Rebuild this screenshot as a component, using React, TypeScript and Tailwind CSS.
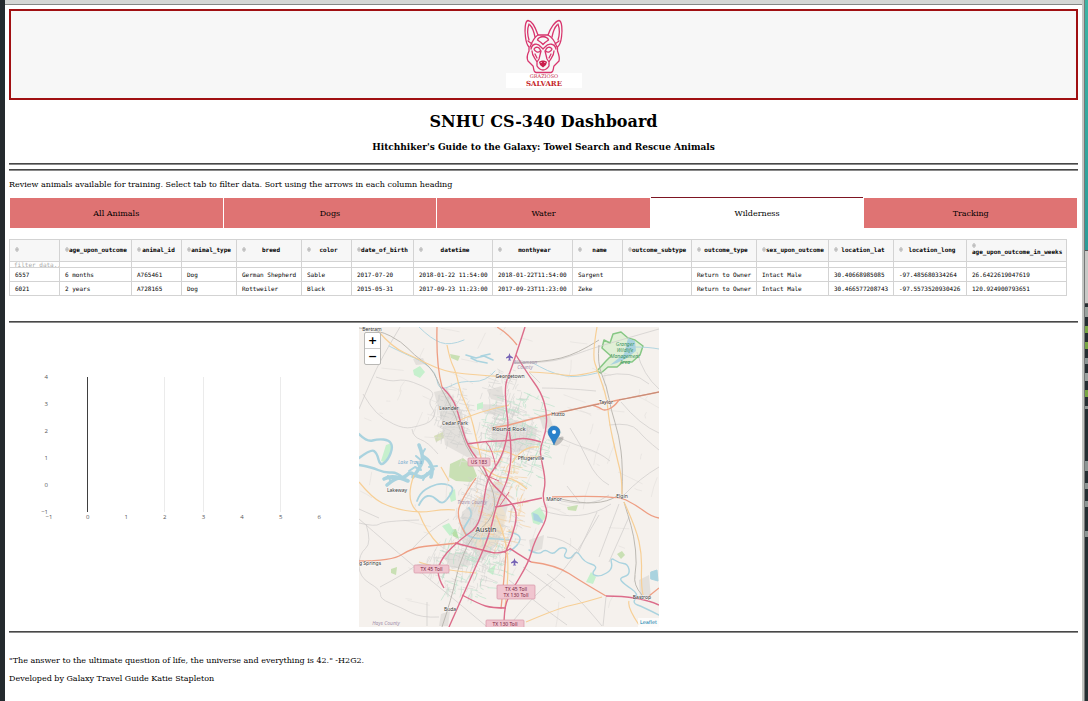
import React from "react";

const TABS = ["All Animals", "Dogs", "Water", "Wilderness", "Tracking"];

type Column = { name: string; width: string; wrap?: boolean };

const COLUMNS: Column[] = [
  { name: "", width: "w-[50px]" },
  { name: "age_upon_outcome", width: "w-[72px]" },
  { name: "animal_id", width: "w-[50px]" },
  { name: "animal_type", width: "w-[55px]" },
  { name: "breed", width: "w-[65px]" },
  { name: "color", width: "w-[50px]" },
  { name: "date_of_birth", width: "w-[62px]" },
  { name: "datetime", width: "w-[79px]" },
  { name: "monthyear", width: "w-[80px]" },
  { name: "name", width: "w-[50px]" },
  { name: "outcome_subtype", width: "w-[69px]" },
  { name: "outcome_type", width: "w-[65px]" },
  { name: "sex_upon_outcome", width: "w-[72px]" },
  { name: "location_lat", width: "w-[65px]" },
  { name: "location_long", width: "w-[73px]" },
  { name: "age_upon_outcome_in_weeks", width: "w-[100px]", wrap: true },
];

const ROWS = [
  ["6557", "6 months", "A765461", "Dog", "German Shepherd", "Sable", "2017-07-20", "2018-01-22 11:54:00", "2018-01-22T11:54:00", "Sargent", "", "Return to Owner", "Intact Male", "30.40668985085", "-97.485680334264", "26.6422619047619"],
  ["6021", "2 years", "A728165", "Dog", "Rottweiler", "Black", "2015-05-31", "2017-09-23 11:23:00", "2017-09-23T11:23:00", "Zeke", "", "Return to Owner", "Intact Male", "30.466577208743", "-97.5573520930426", "120.924900793651"],
];

function Logo() {
  return (
    <svg viewBox="0 0 76 70" className="h-[70px] w-[76px]" role="img" aria-label="Grazioso Salvare">
      <rect x="0" y="55" width="76" height="15" fill="#fff" />
      <g fill="none" stroke="#d8356d" strokeWidth="1.300" strokeLinejoin="round" strokeLinecap="round">
        <path d="M32 17C30 11 26 3 22 2.500C19 3 18.500 12 19.500 19C20 24 21 27 23 29V33C21 37 21 41 22 43L27 48C28 50 27 54 30 54.500H45C48 54 47 50 48 48L53 43C54 40 53 37 51.500 33V29C54 27 55 23 55.500 19C56.500 12 56 3 53 2.500C49 3 44 11 42 17Z" />
        <path d="M23 6C21.500 10 21.500 17 23 22M24 7C27 10 28 14 29 19M52 6C53.500 10 53.500 17 52 22M51 7C48 10 47 14 46 19" />
        <path d="M32 17C28 19 26 24 24 29M42 17C46 19 49 24 51 29M22 23L26 26M53 23L49 26" />
        <path d="M37 18.500C34 19 32 20 31.500 22L35 24.500L37 26.500L39 24.500L42.500 22C42 20 40 19 37 18.500Z" />
        <path d="M25 31C26 26 31 24 35 29L37 31L39 29C43 24 49 26 50 31" />
        <path d="M28 31C30 28 34 29 34.500 33C32 35 29 34 28 31ZM46 31C44 28 40 29 39.500 33C42 35 45 34 46 31Z" />
        <path d="M35 33L33 41L31 44V48C33 51 35 52 37 52C39 52 41 51 43 48V44L41 41L39 33M26 33C26 38 29 40 31 44M48 33C48 38 45 40 43 44M29 36L31 40M45 36L43 40" />
      </g>
      <path d="M33 44C35 42 39 42 41 44L40 47L37 49.500L34 47Z" fill="#c91f4d" />
      <path d="M34.500 44.500H36M38 44.500H39.500" stroke="#f7b9ca" strokeWidth=".8" />
      <text x="38" y="60" textAnchor="middle" fontSize="5" fontFamily="DejaVu Serif, serif" fill="#c4304c">GRAZIOSO</text>
      <text x="38" y="68" textAnchor="middle" fontSize="7" fontWeight="700" fontFamily="DejaVu Serif, serif" fill="#c41f2c">SALVARE</text>
    </svg>
  );
}

function Rule() {
  return <hr className="h-[2px] border-0 border-t border-b border-t-[#484848] border-b-[#8a8a8a]" />;
}

function SortArrows() {
  return (
    <button type="button" aria-label="Sort" className="shrink-0">
      <svg viewBox="0 0 4 5" className="h-[5px] w-[4px]">
        <path d="M.5 2.200L2 .2L3.500 2.200ZM.5 2.800L2 4.800L3.500 2.800Z" fill="#dedede" stroke="#9c9c9c" strokeWidth=".5" />
      </svg>
    </button>
  );
}

function DataTable() {
  return (
    <table className="table-fixed w-[1058px] border-collapse font-['DejaVu_Sans_Mono',monospace] text-[6px] leading-[8px]">
      <colgroup>
        {COLUMNS.map((c, i) => (
          <col key={i} className={c.width} />
        ))}
      </colgroup>
      <thead>
        <tr className="h-[22px] bg-[#f7f7f7]">
          {COLUMNS.map((c, i) => (
            <th key={i} className="border border-[#d3d3d3] px-[5px] pb-[2px] font-bold whitespace-nowrap">
              <div className={c.wrap ? "flex flex-col items-start leading-[8px]" : "flex items-center"}>
                <SortArrows />
                <span className="flex-1 text-center">{c.name}</span>
              </div>
            </th>
          ))}
        </tr>
        <tr className="h-[6px]">
          {COLUMNS.map((c, i) => (
            <td key={i} className="border border-[#d3d3d3] p-0">
              <input
                aria-label={"Filter " + (c.name || "index")}
                placeholder={i === 0 ? "filter data..." : ""}
                className="block h-[5px] w-full overflow-hidden pl-[4px] text-[6px] leading-[5px] outline-none placeholder:text-[#a8a8a8]"
              />
            </td>
          ))}
        </tr>
      </thead>
      <tbody>
        {ROWS.map((row) => (
          <tr key={row[0]} className="h-[14px]">
            {row.map((cell, i) => (
              <td key={i} className="border border-[#d3d3d3] px-[5px] whitespace-nowrap">
                {cell}
              </td>
            ))}
          </tr>
        ))}
      </tbody>
    </table>
  );
}

function Plot() {
  const xs = [-1, 0, 1, 2, 3, 4, 5, 6];
  const ys = [4, 3, 2, 1, 0, -1];
  const label = (n: number) => (n < 0 ? "−" + Math.abs(n) : String(n));
  return (
    <svg viewBox="0 0 350 300" className="h-[300px] w-[350px] shrink-0" role="img" aria-label="Chart">
      <g stroke="#ebebeb" strokeWidth="1">
        <path d="M155.500 50V185M194.500 50V185M271.500 50V185" />
      </g>
      <path d="M78.500 50V185" stroke="#3f3f3f" strokeWidth="1" />
      <g fontFamily="Open Sans, sans-serif" fontSize="6" fill="#555">
        {ys.map((n, i) => (
          <text key={n} x="39" y={52 + i * 27} textAnchor="end">
            {label(n)}
          </text>
        ))}
        {xs.map((n, i) => (
          <text key={n} x={40 + i * 38.6} y="192" textAnchor="middle">
            {label(n)}
          </text>
        ))}
      </g>
    </svg>
  );
}

function seeded(seed: number) {
  let s = seed;
  return () => {
    s = (s * 16807) % 2147483647;
    return s / 2147483647;
  };
}

function streets(seed: number, cx: number, cy: number, rx: number, ry: number, count: number, max: number) {
  const rand = seeded(seed);
  let d = "";
  for (let i = 0; i < count; i++) {
    const a = rand() * 6.283;
    const r = Math.sqrt(rand());
    const x = cx + Math.cos(a) * r * rx;
    const y = cy + Math.sin(a) * r * ry;
    const dir = (rand() > 0.5 ? 0.3 : 1.87) + (rand() - 0.5) * 0.5;
    const len = 2 + rand() * max;
    const bend = (rand() - 0.5) * 5;
    d += `M${x.toFixed(1)} ${y.toFixed(1)}q${((Math.cos(dir) * len) / 2 + bend).toFixed(1)} ${((Math.sin(dir) * len) / 2).toFixed(1)} ${(Math.cos(dir) * len).toFixed(1)} ${(Math.sin(dir) * len).toFixed(1)}`;
  }
  return d;
}

// Rounds the corners of polylines written with absolute M, L, H and V commands.
function smooth(d: string) {
  let out = "";
  for (const part of d.split("M").filter(Boolean)) {
    const pts: [number, number][] = [];
    for (const seg of part.match(/[LHV]?[^LHV]+/g) || []) {
      const nums = (seg.match(/-?[\d.]+/g) || []).map(Number);
      const last = pts[pts.length - 1];
      if (seg[0] === "H") pts.push([nums[0], last[1]]);
      else if (seg[0] === "V") pts.push([last[0], nums[0]]);
      else for (let i = 0; i + 1 < nums.length; i += 2) pts.push([nums[i], nums[i + 1]]);
    }
    out += `M${pts[0][0]} ${pts[0][1]}`;
    for (let i = 1; i < pts.length - 1; i++) {
      const end = i === pts.length - 2;
      const mx = end ? pts[i + 1][0] : (pts[i][0] + pts[i + 1][0]) / 2;
      const my = end ? pts[i + 1][1] : (pts[i][1] + pts[i + 1][1]) / 2;
      out += `Q${pts[i][0]} ${pts[i][1]} ${mx} ${my}`;
    }
    if (pts.length === 2) out += `L${pts[1][0]} ${pts[1][1]}`;
  }
  return out;
}

const STREETS_GRAY = [
  streets(11, 94, 88, 18, 32, 120, 9),
  streets(23, 148, 108, 30, 34, 130, 12),
  streets(37, 128, 190, 32, 52, 200, 10),
  streets(41, 100, 238, 32, 30, 100, 12),
  streets(53, 143, 65, 20, 28, 60, 12),
].join("");
const STREETS_GREEN = streets(67, 158, 108, 38, 52, 120, 12) + streets(71, 112, 235, 38, 38, 70, 10);
const STREETS_WARM = streets(83, 140, 175, 26, 46, 90, 10);
const STREETS_RURAL = streets(97, 150, 150, 170, 165, 90, 26);

const PLACES: [string, number, number, number][] = [
  ["Bertram", 13, 4, 5],
  ["Georgetown", 151, 51, 5],
  ["Leander", 90, 83, 5],
  ["Cedar Park", 96, 98, 5],
  ["Hutto", 199, 89, 5],
  ["Taylor", 247, 77, 5],
  ["Round Rock", 150, 104, 6],
  ["Pflugerville", 172, 133, 5],
  ["Lakeway", 38, 165, 5],
  ["Austin", 127, 205, 7],
  ["Manor", 195, 174, 5],
  ["Elgin", 263, 171, 5],
  ["g Springs", 11, 238, 5],
  ["Buda", 91, 284, 5],
  ["Bastrop", 283, 272, 5],
];

function Shield({ x, y, w, h, lines }: { x: number; y: number; w: number; h: number; lines: string[] }) {
  return (
    <g>
      <rect x={x} y={y} width={w} height={h} rx="1" fill="#f0c5cf" stroke="#d797a7" strokeWidth=".7" />
      {lines.map((t, i) => (
        <text key={t} x={x + w / 2} y={y + 6 + i * 6} textAnchor="middle" fontSize="5" fill="#7a2440">
          {t}
        </text>
      ))}
    </g>
  );
}

function MapView() {
  return (
    <div className="relative h-[300px] w-[300px] shrink-0 overflow-hidden bg-[#f5f1ed]">
      <svg viewBox="0 0 300 300" className="h-[300px] w-[300px]" role="img" aria-label="Map of Austin">
        <g fill="#dcd9d6" opacity=".7">
          <path d="M75 65L88 62L103 85L107 110L122 128L108 130L86 118L83 95Z" />
          <path d="M128 63L143 59L145 75L132 72ZM118 77L145 78V88L126 87Z" />
          <path d="M132 98L158 93L178 102L175 122L150 126L133 115Z" />
          <path d="M103 185L119 172L142 150L149 178L140 215L124 233L101 212Z" />
          <path d="M170 213L185 208L183 222L172 226ZM83 228L108 224L112 238L93 242ZM180 88L190 87L194 99L184 102ZM54 32L64 31L67 37L57 38ZM280 253L290 248L292 272L281 270ZM82 287L91 284L89 299L80 299Z" />
        </g>
        <path d="M128 188L142 178L148 190L140 214L122 226L112 212Z" fill="#f0dfc4" opacity=".6" />
        <g fill="#c9e0b4">
          <path d="M54 43L61 39L66 45L61 51L55 48Z" fill="#c6f0cd" />
          <path d="M91 27L101 29L99 34L92 31Z" />
          <path d="M118 77L124 75L124 81L118 83Z" fill="#c6f0cd" />
          <path d="M75 109L84 105L85 111L77 115Z" fill="#d6dfb8" />
          <path d="M91 137L104 131L114 139L118 149L112 155L97 154L90 150Z" />
          <path d="M22 134L27 118L33 116L31 129L25 135Z" fill="#c6f0cd" />
          <path d="M92 203L97 202L100 212L94 209Z" fill="#b6dfa8" />
          <path d="M83 199L90 196L95 204L91 209ZM172 186L181 180L187 190L180 198L174 196ZM227 255L232 245L237 250L234 257Z" fill="#c6f0cd" />
          <path d="M258 227L263 224L266 228L262 232ZM208 180L219 178L217 184L209 183ZM32 242L38 240L37 248L32 246Z" />
          <path d="M90 166L96 162L97 173L92 175ZM128 244L137 237L134 248Z" fill="#c6f0cd" />
        </g>
        <path d="M243 21L245 13L251 16L254 7L262 5L269 11L276 13L284 19L281 28L273 35L264 35L258 40L249 40L242 46L238 44L247 34L252 29Z" fill="#e0efd6" stroke="#86c784" strokeWidth="1.500" strokeLinejoin="round" />
        <path d="M269 11L276 14L277 24L268 31L258 36L251 38L265 27Z" fill="#aad3df" />
        <g fill="none" stroke="#aad3df" strokeLinecap="round" strokeLinejoin="round">
          <path d={smooth("M0 107L8 115L19 112L30 113L34 120L29 133L21 139L18 126L12 122L0 131M0 138L12 140L26 146L38 145L44 151")} strokeWidth="2.400" />
          <path d={smooth("M28 158L36 151L45 151L51 145L57 149L66 151L74 142M60 118L65 130L61 141L54 150M65 130L76 137L72 150M25 152L34 147L49 154")} strokeWidth="3.600" />
          <path d="M50 144L56 140L62 143L58 135M66 122L63 127M70 140L78 139M57 129L63 134M32 155L29 149M68 146L64 153" strokeWidth="2" />
          <path d={smooth("M58 174L61 166L72 159L83 156L96 160L88 173L82 177L73 168L64 170L60 178M110 181L114 186L108 196L103 204L114 212L134 211L150 213")} strokeWidth="1.800" />
          <path d="M107 28L117 31L125 29L134 33M112 31L118 34L128 36M122 29L131 27" strokeWidth="1.600" />
          <path d={smooth("M30 19L48 28L63 34L77 46L79 60L86 62L101 54L127 55L136 44M60 0L72 12L91 19L105 13M172 35L181 40L196 47L218 51L238 46M276 20L290 20L300 22")} strokeWidth=".9" />
          <path d={smooth("M150 205L162 207L160 218L151 224M170 223L180 228L186 222L194 228L201 220L209 222L204 230L212 232L218 223L225 235L239 239L232 247L241 250L254 242L251 230L260 236L269 237L271 248L260 251L265 257L280 267L273 276L284 280L300 288M177 188L183 194")} strokeWidth="1.400" />
          <path d="M292 245L298 243L299 254L292 252Z" fill="#aad3df" strokeWidth="1" />
          <path d="M174 186L179 188L184 196L175 193Z" fill="#aad3df" strokeWidth=".5" />
        </g>
        <g fill="none" strokeLinecap="round">
          <path d={STREETS_RURAL} stroke="#e2dfdc" strokeWidth=".6" />
          <path d={STREETS_GRAY} stroke="#cfcecc" strokeWidth=".5" />
          <path d={STREETS_GREEN} stroke="#b5e0c8" strokeWidth=".6" />
          <path d={STREETS_WARM} stroke="#f3cd9c" strokeWidth=".6" />
        </g>
        <g fill="none" stroke="#cfccca" strokeWidth=".7" strokeLinejoin="round">
          <path d={smooth("M41 0L28 22L14 48L0 82M17 50L31 55L45 52L64 59L76 66L69 76L77 86L72 95L60 99L45 102L24 92L11 79L4 67M53 102L54 110L69 115L79 127M0 192L30 218L70 252L90 268L127 299")} />
          <path d={smooth("M0 196L17 200L24 194L60 193M7 197L13 216L0 227L0 250L22 263L21 272L41 280L62 291L80 290M21 260L47 246L61 235L72 238M68 275V299M90 192L70 203L54 221M0 182L20 191")} />
          <path d={smooth("M155 36L190 36L218 27L237 20L300 2M278 25L284 48L300 62M262 75L281 98L300 106M244 49L273 42L290 57M183 61L205 61L237 64M211 101L222 118L237 151L250 158M187 104L210 116L240 125L251 134M170 45L181 56M250 98L272 95L286 112L300 123")} />
          <path d={smooth("M182 183L222 197L252 177M250 168L234 181L202 174M240 188L208 244L177 265L150 299M238 185L219 226M260 177L240 230M208 159L221 176M188 247L211 264L229 282L243 299M270 190L250 235M247 270L244 299M164 240L206 271M150 253L181 279L208 298M188 210L204 211L218 223M300 140L281 151L265 168")} />
        </g>
        <g fill="none" stroke="#b5b2ab" strokeWidth=".9">
          <path d={smooth("M0 1L20 3L43 15L55 28L73 41L82 62L97 88L106 119L123 143L136 166L135 190L112 210L99 240L93 270L83 300M155 36L186 35L218 27L240 13M202 172L240 181L258 169M265 175L269 188L275 209L278 237L274 258L283 268")} />
          <path d={smooth("M240 18L238 36L248 60L252 83L260 108L264 140L263 168")} />
        </g>
        <g fill="none" stroke="#f7cf96" strokeWidth="1.200" strokeLinejoin="round">
          <path d={smooth("M20 5L33 20L57 31L77 41L95 46L133 49L150 50M170 45L193 46L217 50L238 44M88 18L91 33L97 45L102 68L112 88L117 111L122 131M97 95L117 85L150 78M238 0L233 28L239 45L248 71L250 95L258 131L263 151V168")} />
          <path d={smooth("M0 155L13 171L33 181L60 186L87 182L96 183M60 186L67 205L80 218M55 148L45 175L60 186M265 175L277 201L283 228L282 258L284 268M167 295L200 281L223 276L243 270M60 235L75 240L95 244L117 246M110 119L129 126L146 123L162 132L182 129M137 188L147 210L150 248L146 280M270 274L268 280L280 298M82 140L90 154M153 136L164 118L180 120M124 140L137 151L154 150L168 162")} />
        </g>
        <g fill="none" stroke="#ee9e83" strokeWidth="1.300" strokeLinejoin="round">
          <path d={smooth("M78 0L77 38L83 60M0 234L33 234L53 221L77 218L100 216M193 170L257 168L277 178L293 190L300 191M150 98L187 88L213 83L233 78L260 73L300 65M233 78L240 80L245 84L255 80L260 73M138 0L150 7L158 18M172 235L197 238L223 255L247 269M290 269L300 261M150 98L133 101")} />
          <path d={smooth("M147 226L145 253L142 282M117 151L103 171L97 191L107 208")} />
        </g>
        <path d="M198 86L240 77M260 73L300 65" fill="none" stroke="#b88876" strokeWidth=".8" />
        <g fill="none" stroke="#dc6c8a" strokeWidth="1.400" strokeLinejoin="round">
          <path d={smooth("M166 0L157 28L150 48L146 58L147 81L150 101L143 131L128 151L124 181L118 201L103 211L83 230L77 248L85 261")} />
          <path d={smooth("M150 101L153 120L150 151L138 175L130 210L113 248L90 300")} />
          <path d={smooth("M157 28L168 46L182 65L188 85L187 105L181 121L182 131L187 155L183 171L190 188L175 215L170 235L150 268L145 283V300")} />
          <path d={smooth("M83 60L94 71L100 89L108 119L125 140L129 151L136 160L149 172L159 185L153 211L146 226M108 117L127 114L150 114L167 110L182 115M96 216L123 223L139 227L152 222L150 221L172 235M136 180L150 178L183 171M103 268L120 277L133 281L147 281M247 269L280 269L300 278")} />
          <path d={smooth("M127 115L134 122L137 142M126 148L140 154M150 165L140 180")} strokeWidth="1" />
        </g>
        <g fontFamily="Noto Sans, sans-serif">
          {PLACES.map(([name, x, y, size]) => (
            <text key={name} x={x} y={y} fontSize={size} textAnchor="middle" fill="#333" stroke="#fff" strokeWidth=".8" strokeOpacity=".65" paintOrder="stroke">
              {name}
            </text>
          ))}
          <g fontSize="5" fontStyle="italic" textAnchor="middle" fill="#a593ad">
            <text x="166" y="37">Williamson</text>
            <text x="166" y="42">County</text>
            <text x="113" y="177">Travis County</text>
            <text x="27" y="298">Hays County</text>
          </g>
          <text x="51" y="137" fontSize="5" fontStyle="italic" textAnchor="middle" fill="#7aaed0">Lake Travis</text>
          <g fontSize="5" fontStyle="italic" textAnchor="middle" fill="#3c9360">
            <text x="266" y="19">Granger</text>
            <text x="266" y="25">Wildlife</text>
            <text x="266" y="31">Management</text>
            <text x="266" y="37">Area</text>
          </g>
          <Shield x={109} y={131} w={22} h={8} lines={["US 183"]} />
          <Shield x={55} y={238} w={35} h={8} lines={["TX 45 Toll"]} />
          <Shield x={138} y={258} w={38} h={14} lines={["TX 45 Toll", "TX 130 Toll"]} />
          <Shield x={127} y={293} w={38} h={9} lines={["TX 130 Toll"]} />
        </g>
        <g fill="#7562b5">
          <path d="M150.500 26L151.300 28.500L154 30.500V31.500L151.300 30.800V32.500L152.300 33.500H148.700L149.700 32.500V30.800L147 31.500V30.500L149.700 28.500Z" />
          <path d="M155.500 231L156.300 233.500L159 235.500V236.500L156.300 235.800V237.500L157.300 238.500H153.700L154.700 237.500V235.800L152 236.500V235.500L154.700 233.500Z" />
        </g>
        <ellipse cx="200" cy="114" rx="6" ry="2.500" transform="rotate(-45 200 114)" fill="#000" opacity=".2" />
        <path d="M195 118C193 112 189 109 189 105A6 6 0 0 1 201 105C201 109 197 112 195 118Z" fill="#2a81cb" stroke="#226ba6" strokeWidth=".5" />
        <circle cx="195" cy="105" r="2" fill="#fff" />
      </svg>
      <div className="absolute top-[5px] left-[5px] flex flex-col rounded-[2px] border border-[#b9b8b5] bg-white font-['DejaVu_Sans',sans-serif] text-[11px] leading-none font-bold text-black">
        <button type="button" aria-label="Zoom in" className="h-[16px] w-[15px] border-b border-[#ccc]">+</button>
        <button type="button" aria-label="Zoom out" className="h-[15px] w-[15px]">−</button>
      </div>
      <a href="#leaflet" className="absolute right-0 bottom-0 bg-white/70 px-[2px] font-['DejaVu_Sans',sans-serif] text-[5px] leading-[9px] text-[#0078a8]">
        Leaflet
      </a>
    </div>
  );
}

function DesktopEdge() {
  const marks: [string, string][] = [
    ["h-[10px]", "bg-[#9aa39f]"],
    ["h-[7px]", "bg-[#78a644]"],
    ["h-[7px]", "bg-[#78a644]"],
    ["h-[6px]", "bg-[#8b9594]"],
    ["h-[8px]", "bg-[#98a19f]"],
    ["h-[7px]", "bg-[#78a644]"],
    ["h-[3px]", "bg-[#8b9594]"],
  ];
  return (
    <div className="flex w-[3px] shrink-0 flex-col bg-[#242e32]">
      <div className="h-[250px] bg-gradient-to-b from-[#3db3a4] to-[#2c9c98]" />
      <div className="h-[54px] border-y border-[#555] bg-[#c7c9c6]" />
      <div className="flex flex-col gap-[9px] pt-[3px]">
        {marks.map(([h, c], i) => (
          <div key={i} className={h + " " + c} />
        ))}
      </div>
      <div className="mt-[52px] flex flex-col gap-[12px]">
        <div className="h-[10px] bg-[#8b9594]" />
        <div className="h-[6px] bg-[#8b9594]" />
        <div className="h-[6px] bg-[#8b9594]" />
        <div className="mt-[12px] h-[6px] bg-[#8b9594]" />
      </div>
    </div>
  );
}

export default function App() {
  return (
    <div className="flex min-h-screen bg-white font-['DejaVu_Serif',serif] text-[8px] leading-[10px] text-black">
      <div className="w-[5px] shrink-0 bg-[#242a2e]" />
      <div className="min-w-0 flex-1">
        <div className="h-[5px] border-b border-[#858785] bg-[#d4d6d4]" />
        <main className="px-[4px] pt-[4px]">
          <header className="flex h-[91px] justify-center border-2 border-[#a01012] bg-[#f7f7f7] pt-[7px]">
            <Logo />
          </header>
          <h1 className="mt-[12px] text-center text-[16px] leading-[20px] font-bold">SNHU CS-340 Dashboard</h1>
          <h2 className="mt-[10px] mb-[10px] text-center text-[9px] leading-[11px] font-bold">
            Hitchhiker's Guide to the Galaxy: Towel Search and Rescue Animals
          </h2>
          <Rule />
          <div className="h-[4px]" />
          <Rule />
          <p className="mt-[9px]">Review animals available for training. Select tab to filter data. Sort using the arrows in each column heading</p>
          <div role="tablist" className="mt-[7px] grid grid-cols-5 gap-px px-px">
            {TABS.map((t) => (
              <button
                key={t}
                type="button"
                role="tab"
                aria-selected={t === "Wilderness"}
                className={
                  t === "Wilderness"
                    ? "h-[31px] border-t border-t-[#7d1522] bg-white pt-[2px]"
                    : "h-[31px] border-t border-t-white bg-[#df7373] pt-[2px]"
                }
              >
                {t}
              </button>
            ))}
          </div>
          <div className="mt-[11px] mb-[25px]">
            <DataTable />
          </div>
          <Rule />
          <div className="mt-[4px] mb-[4px] flex">
            <Plot />
            <MapView />
          </div>
          <Rule />
          <p className="mt-[23px]">"The answer to the ultimate question of life, the universe and everything is 42." -H2G2.</p>
          <p className="mt-[8px]">Developed by Galaxy Travel Guide Katie Stapleton</p>
        </main>
      </div>
      <div className="w-[3px] shrink-0 border-r border-[#777] bg-[#c3c6c3]" />
      <DesktopEdge />
    </div>
  );
}
